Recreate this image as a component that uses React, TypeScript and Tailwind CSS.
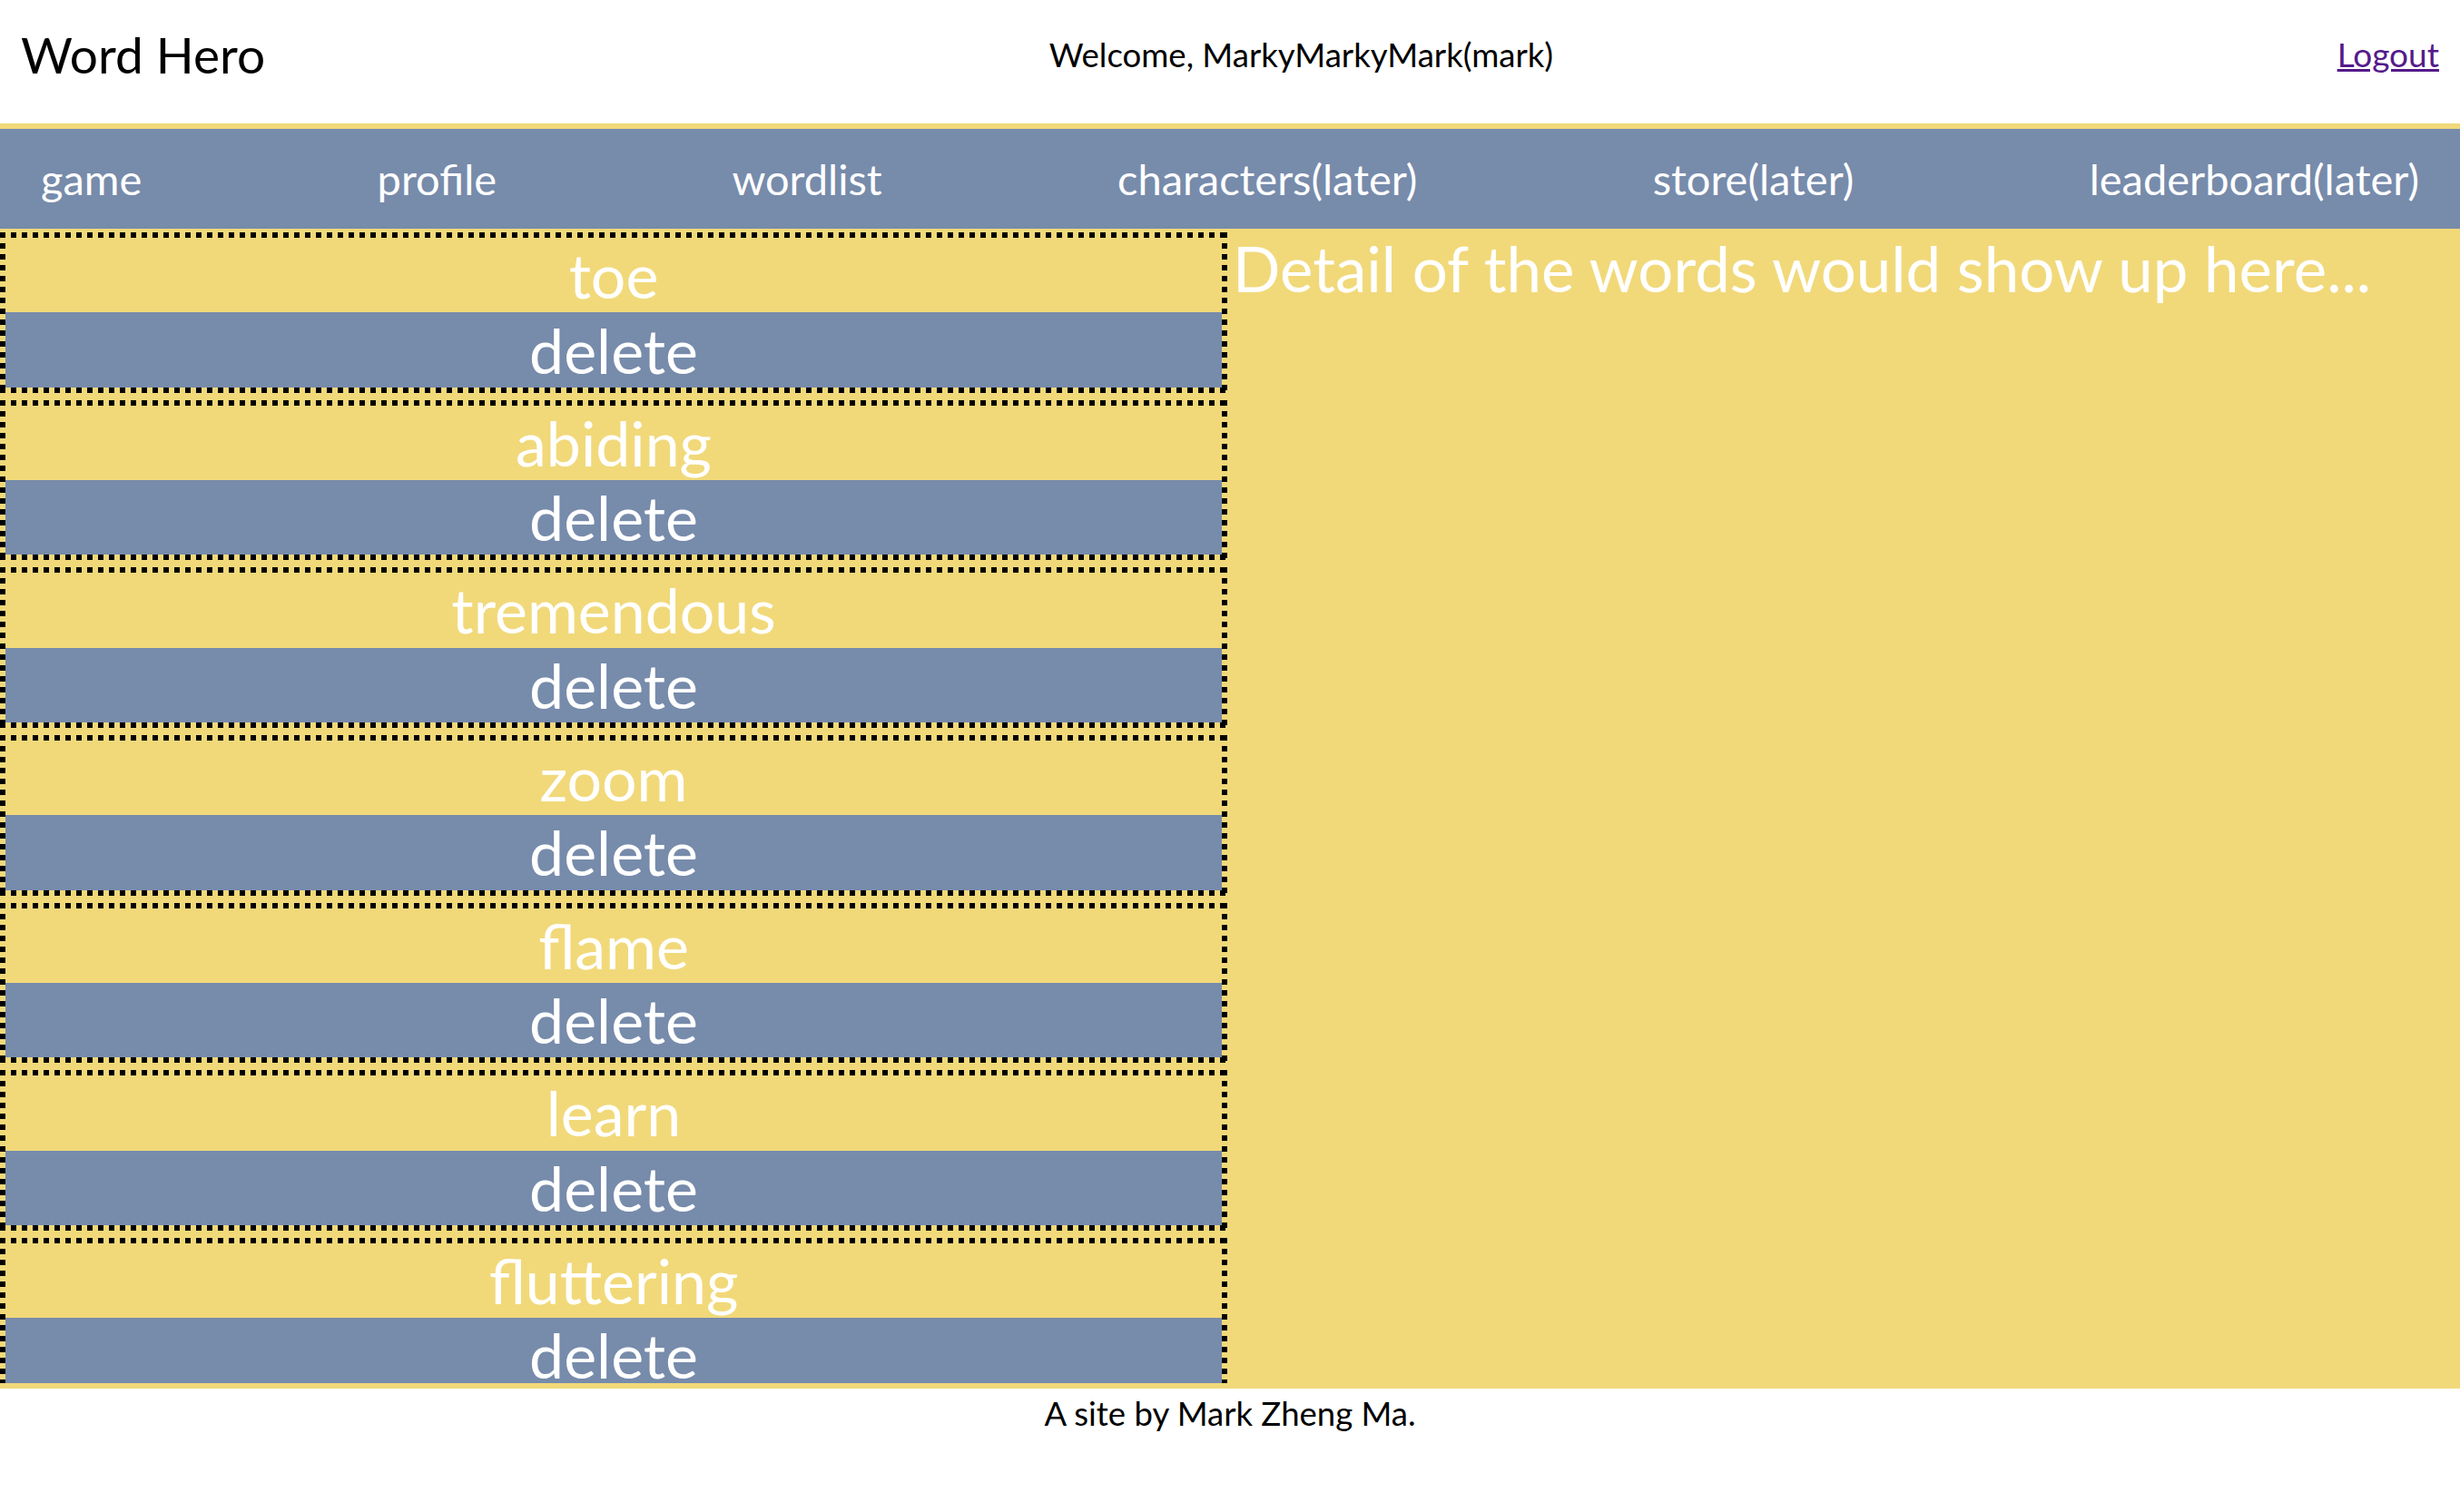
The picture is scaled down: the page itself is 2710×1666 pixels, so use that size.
const navItems = ["game", "profile", "wordlist", "characters(later)", "store(later)", "leaderboard(later)"];

const words = ["toe", "abiding", "tremendous", "zoom", "flame", "learn", "fluttering"];

// square-dot border, like the browser draws a 3px dotted border on a retina screen
function WordCard({ word }: { word: string }) {
  return (
    <div className="shrink-0 p-[6px] [background:repeating-linear-gradient(90deg,#000_0_6px,transparent_6px_12px)_top/100%_6px_no-repeat,repeating-linear-gradient(90deg,#000_0_6px,transparent_6px_12px)_bottom/100%_6px_no-repeat,repeating-linear-gradient(180deg,#000_0_6px,transparent_6px_12px)_left/6px_100%_no-repeat,repeating-linear-gradient(180deg,#000_0_6px,transparent_6px_12px)_right/6px_100%_no-repeat]">
      <div className="flex h-[82.33px] items-center justify-center text-[68px] text-white">{word}</div>
      <button
        type="button"
        className="flex h-[82.33px] w-full items-center justify-center bg-[#778bab] text-[68px] text-white"
      >
        delete
      </button>
    </div>
  );
}

export default function App() {
  return (
    <div className="min-h-screen bg-white font-['Lato',sans-serif]">
      <header className="flex h-[136px] items-center justify-between px-[23px] pb-[16px] text-black">
        <h1 className="text-[55px] leading-none">Word Hero</h1>
        <div className="text-[36.6px]">Welcome, MarkyMarkyMark(mark)</div>
        <a href="#" className="text-[37px] text-[#551a8b] underline">
          Logout
        </a>
      </header>
      <nav className="flex h-[116px] items-center justify-between border-t-[6px] border-[#f1d97a] bg-[#778bab] px-[45px] text-[47px] text-white">
        {navItems.map((item) => (
          <span key={item}>{item}</span>
        ))}
      </nav>
      <main className="flex h-[1278px] bg-[#f1d97a]">
        <div className="flex h-[1272px] w-[1352px] shrink-0 flex-col gap-[8px] overflow-hidden pt-[4px]">
          {words.map((w) => (
            <WordCard key={w} word={w} />
          ))}
        </div>
        <div className="pl-[6px] text-[69px] leading-[60px] text-white">
          <p className="pt-[14px]">Detail of the words would show up here...</p>
        </div>
      </main>
      <footer className="text-center text-[36.5px] text-black">A site by Mark Zheng Ma.</footer>
    </div>
  );
}
